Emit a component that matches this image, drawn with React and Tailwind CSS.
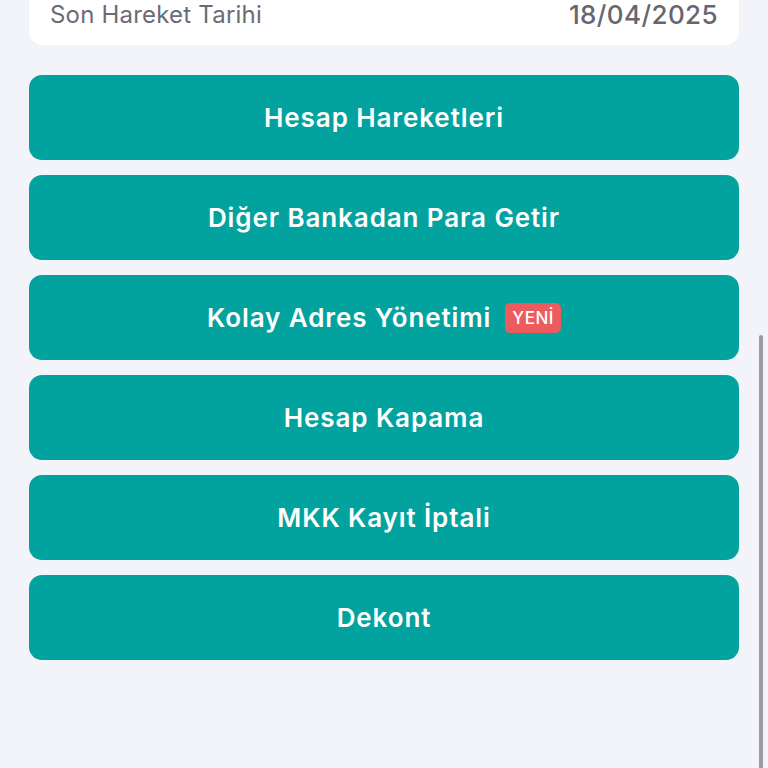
import React from "react";

const actions = [
  { label: "Hesap Hareketleri" },
  { label: "Diğer Bankadan Para Getir" },
  { label: "Kolay Adres Yönetimi", badge: "YENİ" },
  { label: "Hesap Kapama" },
  { label: "MKK Kayıt İptali" },
  { label: "Dekont" },
];

export default function App() {
  return (
    <div
      className="relative h-[768px] w-[768px] overflow-hidden bg-[#f3f4f9]"
      style={{ fontFamily: "Inter, 'Open Sans', sans-serif" }}
    >
      {/* Account summary card (scrolled, top clipped) */}
      <div className="mx-[29px] -mt-[20px] flex h-[65px] items-center justify-between rounded-[14px] bg-white px-[21px] pt-[4px]">
        <span className="text-[24px] leading-[28px] font-normal tracking-[0.2px] text-[#6b6b78]">Son Hareket Tarihi</span>
        <span className="text-[26px] leading-[28px] font-medium tracking-[0.4px] text-[#66666f]">18/04/2025</span>
      </div>

      {/* Action buttons */}
      <div className="mx-[29px] mt-[30px] flex flex-col gap-[15px]">
        {actions.map((a) => (
          <button
            key={a.label}
            className="flex h-[85px] w-full items-center justify-center gap-[14px] rounded-[13px] bg-[#02a39f] text-[26px] font-semibold tracking-[0.9px] text-white"
          >
            <span>{a.label}</span>
            {a.badge && (
              <span className="rounded-[5px] bg-[#ec5b5e] px-[7px] py-[2px] text-[17px] font-medium leading-[26px] tracking-[0.5px] text-white">
                {a.badge}
              </span>
            )}
          </button>
        ))}
      </div>

      {/* Scrollbar */}
      <div className="absolute right-[5px] top-[335px] h-[440px] w-[4px] rounded-full bg-[#9c9ca0]" />
    </div>
  );
}
